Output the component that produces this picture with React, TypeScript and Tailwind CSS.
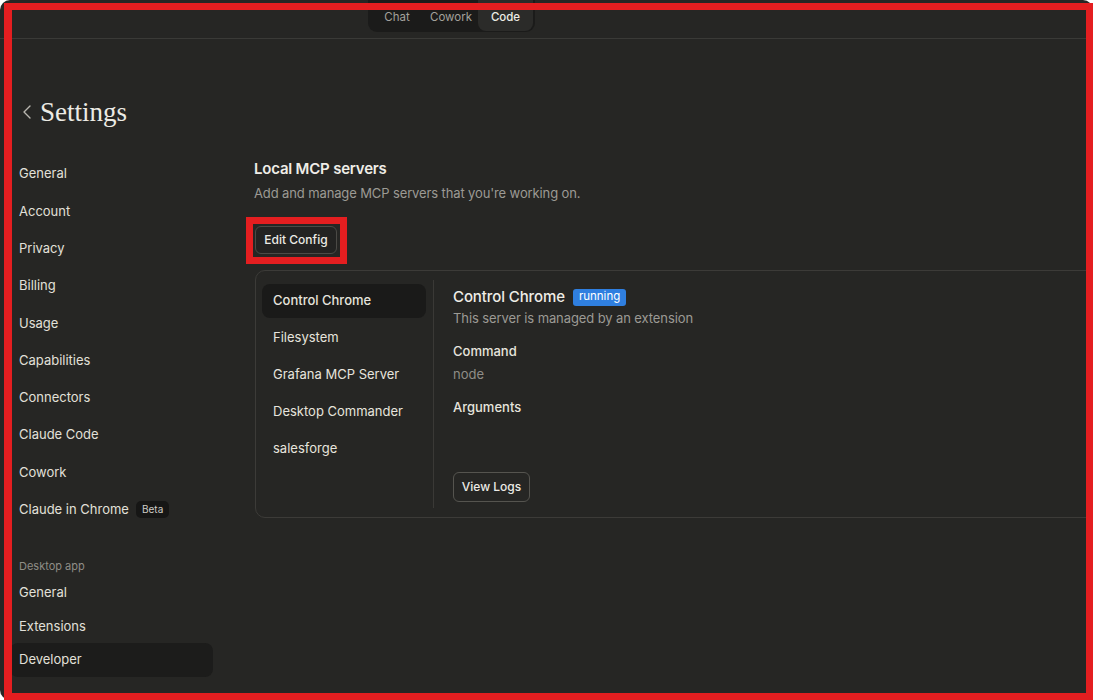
import React from "react";

const font = { fontFamily: "Inter, 'Noto Sans', sans-serif" };

function SideItem({ label, active, h, badge }: { label: string; active?: boolean; h: string; badge?: string }) {
  return (
    <div
      className={`flex items-center px-[9px] rounded-lg text-[13px] text-[#e2e0d9] ${h} ${active ? "bg-[#1c1c1b]" : ""}`}
    >
      <span>{label}</span>
      {badge && (
        <span className="ml-[7px] rounded-[5px] bg-[#161615] px-[6px] h-[17px] flex items-center text-[10px] text-[#cfcdc6]">
          {badge}
        </span>
      )}
    </div>
  );
}

export default function App() {
  const top = ["General", "Account", "Privacy", "Billing", "Usage", "Capabilities", "Connectors", "Claude Code", "Cowork"];
  const servers = ["Control Chrome", "Filesystem", "Grafana MCP Server", "Desktop Commander", "salesforge"];
  return (
    <div className="w-[1093px] h-[700px] bg-white relative overflow-hidden" style={font}>
      <div className="w-full h-full bg-[#262624] rounded-[10px] overflow-hidden flex flex-col">
        {/* top bar */}
        <div className="h-[39px] shrink-0 border-b border-[#3a3a37] flex">
          <div className="ml-[368px] h-[32px] flex bg-[#1b1b1a] rounded-b-[9px] pl-[2px] pr-[2px] pb-[1px] text-[11.5px]">
            <div className="w-[54px] flex items-center justify-center pt-[4px] text-[#a3a19b]">Chat</div>
            <div className="w-[54px] flex items-center justify-center pt-[4px] text-[#a3a19b]">Cowork</div>
            <div className="w-[55px] flex items-center justify-center pt-[4px] text-[#ecebe5] font-medium bg-[#2b2b29] rounded-b-[8px]">
              Code
            </div>
          </div>
        </div>
        {/* body */}
        <div className="flex flex-1 min-h-0">
          <div className="w-[213px] shrink-0 pl-[10px] flex flex-col">
            <div className="flex items-center h-[28px] mt-[59px] pl-[12px] gap-[8px]">
              <svg width="10" height="16" viewBox="0 0 10 16" fill="none">
                <path d="M8 2 L2 8 L8 14" stroke="#b9b7b0" strokeWidth="1.4" strokeLinecap="round" strokeLinejoin="round" />
              </svg>
              <span
                className="text-[27px] leading-none text-[#ecebe5]"
                style={{ fontFamily: "'Liberation Serif', 'DejaVu Serif', serif" }}
              >
                Settings
              </span>
            </div>
            <div className="mt-[29.5px] flex flex-col">
              {top.map((t) => (
                <SideItem key={t} label={t} h="h-[37.3px]" />
              ))}
              <SideItem label="Claude in Chrome" badge="Beta" h="h-[37.3px]" />
            </div>
            <div className="mt-[27px] h-[21px] flex items-center px-[9px] text-[11px] text-[#8f8d87]">Desktop app</div>
            <SideItem label="General" h="h-[33.5px]" />
            <SideItem label="Extensions" h="h-[33.5px]" />
            <SideItem label="Developer" h="h-[33.5px]" active />
          </div>
          <div className="flex-1 ml-[41px] pt-[120px] flex flex-col items-start">
            <div className="text-[15px] leading-[20px] font-semibold tracking-[-0.2px] text-[#efede7]">Local MCP servers</div>
            <div className="mt-[5px] text-[13px] leading-[18px] tracking-[-0.12px] text-[#9c9a94]">
              Add and manage MCP servers that you're working on.
            </div>
            <button className="mt-[24px] ml-[1px] h-[28px] w-[82px] rounded-[6px] border border-[#4b4a46] bg-[#232322] text-[12px] text-[#ecebe5] font-medium">
              Edit Config
            </button>
            <div className="mt-[16px] ml-[1px] w-[860px] h-[248px] shrink-0 border border-[#3c3b38] rounded-[10px] flex pl-[6px] py-[9px]">
              <div className="w-[164px] shrink-0 pt-[4px] flex flex-col gap-[3px]">
                {servers.map((s, i) => (
                  <div
                    key={s}
                    className={`h-[34px] flex items-center px-[11px] rounded-lg text-[13px] text-[#e6e4dd] ${
                      i === 0 ? "bg-[#1a1a19] font-medium" : ""
                    }`}
                  >
                    {s}
                  </div>
                ))}
              </div>
              <div className="w-px ml-[7px] bg-[#3a3936]" />
              <div className="pl-[19px] pt-[7px] flex flex-col items-start">
                <div className="flex items-center h-[20px]">
                  <span className="text-[15px] font-medium tracking-[-0.1px] text-[#efede7]">Control Chrome</span>
                  <span className="ml-[8px] h-[17px] px-[6px] rounded-[3px] bg-[#2f7fe0] text-[11.5px] text-white flex items-center">
                    running
                  </span>
                </div>
                <div className="mt-[2px] text-[13px] leading-[18px] tracking-[-0.1px] text-[#9c9a94]">
                  This server is managed by an extension
                </div>
                <div className="mt-[15px] text-[13px] leading-[18px] font-medium text-[#e6e4dd]">Command</div>
                <div className="mt-[5px] text-[13px] leading-[18px] text-[#8f8d87]">node</div>
                <div className="mt-[15px] text-[13px] leading-[18px] font-medium text-[#e6e4dd]">Arguments</div>
                <button className="mt-[56px] h-[30px] w-[77px] rounded-[6px] border border-[#55544f] text-[12px] text-[#ecebe5] font-medium">
                  View Logs
                </button>
              </div>
            </div>
          </div>
        </div>
      </div>
      {/* annotation overlays */}
      <div className="absolute left-[4px] top-[3px] right-0 bottom-0 border-[7px] border-l-[8px] border-[#e41e20] pointer-events-none" />
      <div className="absolute left-[246px] top-[217px] w-[101px] h-[47px] border-[7px] border-[#e41e20] pointer-events-none" />
    </div>
  );
}
